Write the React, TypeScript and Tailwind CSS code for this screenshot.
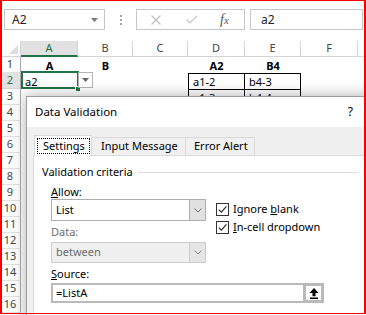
import React from 'react';

const COLS = [
  { key: 'A', w: 'w-[57px]' },
  { key: 'B', w: 'w-[55px]' },
  { key: 'C', w: 'w-[55px]' },
  { key: 'D', w: 'w-[57px]' },
  { key: 'E', w: 'w-[56px]' },
  { key: 'F', w: 'w-[57px]' },
  { key: 'G', w: 'w-[57px]' },
];

const ROWS = Array.from({ length: 16 }, (_, i) => i + 1);

function Chevron({ color = '#6b6b6b' }: { color?: string }) {
  return (
    <svg width="8" height="5" viewBox="0 0 8 5">
      <path d="M0.5 0.5 L4 4 L7.5 0.5" fill="none" stroke={color} strokeWidth="1" />
    </svg>
  );
}

function Check() {
  return (
    <span className="flex h-[13px] w-[13px] items-center justify-center border border-[#333] bg-white">
      <svg width="11" height="11" viewBox="0 0 11 11">
        <path d="M1.8 5.6 L4.4 8.2 L9.4 2.4" fill="none" stroke="#222" strokeWidth="1.1" />
      </svg>
    </span>
  );
}

function FormulaBar() {
  return (
    <div className="flex h-[41px] items-start pl-[4px] pt-[9px]">
      <div className="flex h-[21px] w-[101px] shrink-0 items-center justify-between border border-[#c6c6c6] pl-[7px] pr-[6px] text-[12px] text-[#222]">
        <span>A2</span>
        <svg width="7" height="4" viewBox="0 0 7 4">
          <path d="M0 0 H7 L3.5 4 Z" fill="#7a7a7a" />
        </svg>
      </div>
      <div className="flex h-[21px] w-[31px] shrink-0 flex-col items-center justify-center gap-[2px]">
        <span className="h-[2px] w-[2px] bg-[#a6a6a6]" />
        <span className="h-[2px] w-[2px] bg-[#a6a6a6]" />
        <span className="h-[2px] w-[2px] bg-[#a6a6a6]" />
      </div>
      <div className="flex h-[21px] w-[109px] shrink-0 items-center border border-[#c6c6c6]">
        <span className="ml-[13px] flex w-[12px] justify-center">
          <svg width="10" height="10" viewBox="0 0 10 10">
            <path d="M0.5 0.5 L9.5 9.5 M9.5 0.5 L0.5 9.5" stroke="#c2c2c2" strokeWidth="1.4" />
          </svg>
        </span>
        <span className="ml-[23px] flex w-[14px] justify-center">
          <svg width="12" height="9" viewBox="0 0 12 9">
            <path d="M0.8 4.6 L4 7.8 L11.2 0.8" fill="none" stroke="#cdcdcd" strokeWidth="1.5" />
          </svg>
        </span>
        <span className="ml-[21px] font-['Liberation_Serif',serif] text-[14px] italic leading-none text-[#555]">
          f<span className="text-[11px]">x</span>
        </span>
      </div>
      <div className="ml-[5px] flex h-[21px] w-[113px] shrink-0 items-center border border-[#c6c6c6] pl-[10px] text-[12px] text-[#222]">
        a2
      </div>
    </div>
  );
}

function HeaderRow() {
  return (
    <div className="flex h-[16px]">
      <div className="relative w-[21px] shrink-0 border-r border-b border-[#d4d4d4]">
        <svg className="absolute bottom-[2px] right-[2px]" width="9" height="9" viewBox="0 0 9 9">
          <path d="M9 0 V9 H0 Z" fill="#dcdcdc" />
        </svg>
      </div>
      {COLS.map((c) =>
        c.key === 'A' ? (
          <div
            key={c.key}
            className={`${c.w} flex shrink-0 items-center justify-center border-r border-b-2 border-r-[#d4d4d4] border-b-[#217346] bg-[#e1e1e1] text-[11px] text-[#217346]`}
          >
            {c.key}
          </div>
        ) : (
          <div
            key={c.key}
            className={`${c.w} flex shrink-0 items-center justify-center border-r border-b border-[#d4d4d4] text-[11px] text-[#444]`}
          >
            {/* column G sits past the window edge */}
            {c.key === 'G' ? null : c.key}
          </div>
        ),
      )}
    </div>
  );
}

function Cell({ row, col }: { row: number; col: string }) {
  if (row === 1) {
    const t: Record<string, string> = { A: 'A', B: 'B', D: 'A2', E: 'B4' };
    return <span className="w-full text-center font-bold">{t[col] ?? ''}</span>;
  }
  if (row === 2 && col === 'A') {
    return (
      <>
        <span className="pl-[4px]">a2</span>
        <span className="absolute -top-[2px] -right-[1px] bottom-0 left-0 border-2 border-[#217346]" />
        <span className="absolute -right-[3px] -bottom-[3px] h-[6px] w-[6px] border border-white bg-[#217346]" />
      </>
    );
  }
  if (row === 2 && col === 'B') {
    return (
      <span className="absolute -top-[1px] left-0 flex h-[16px] w-[15px] items-center justify-center border border-[#b3b3b3] bg-white">
        <svg width="7" height="4" viewBox="0 0 7 4">
          <path d="M0 0 H7 L3.5 4 Z" fill="#666" />
        </svg>
      </span>
    );
  }
  if (row >= 2 && (col === 'D' || col === 'E')) {
    const t: Record<string, string> = {
      D2: 'a1-2',
      E2: 'b4-3',
      D3: 'a1-3',
      E3: 'b4-4',
    };
    return <span className="pl-[4px]">{t[`${col}${row}`] ?? ''}</span>;
  }
  return null;
}

function Grid() {
  return (
    <div className="flex flex-col font-['Noto_Sans',sans-serif]">
      <HeaderRow />
      {ROWS.map((r) => (
        <div key={r} className="flex h-[16px]">
          <div
            className={
              r === 2
                ? 'flex w-[21px] shrink-0 items-center justify-center border-r border-b border-r-[#ababab] border-b-[#d4d4d4] bg-[#e1e1e1] text-[11px] text-[#217346]'
                : 'flex w-[21px] shrink-0 items-center justify-center border-r border-b border-r-[#ababab] border-b-[#e1e1e1] text-[11px] text-[#444]'
            }
          >
            {r}
          </div>
          {COLS.map((c) => {
            const boxed = r >= 2 && (c.key === 'D' || c.key === 'E');
            const border = boxed
              ? c.key === 'D'
                ? 'border-l border-t border-r border-black'
                : 'border-t border-r border-black'
              : '';
            return (
              <div
                key={c.key}
                className={`${c.w} ${border} relative flex shrink-0 items-center text-[11px] leading-none text-black`}
              >
                <Cell row={r} col={c.key} />
              </div>
            );
          })}
        </div>
      ))}
    </div>
  );
}

function Dialog() {
  return (
    <div className="absolute left-[26px] top-[96px] h-[240px] w-[350px] border border-[#9e9e9e] bg-[#f0f0f0] font-['Noto_Sans',sans-serif] text-[11px] text-black shadow-[0_0_14px_rgba(0,0,0,0.32)]">
      <div className="flex h-[30px] items-center justify-between bg-white pl-[8px] pr-[22px]">
        <span className="text-[11.5px]">Data Validation</span>
        <span className="text-[12px]">?</span>
      </div>
      <div className="px-[6px] pt-[8px]">
        <div className="flex h-[20px] items-end pl-[1px]">
          <div className="relative z-10 -mb-px h-[21px] w-[58px] border-l border-t border-r border-[#d9d9d9] bg-white pl-[2px] pt-[2px]">
            <span className="flex h-[16px] w-[53px] items-center border border-dotted border-black pl-[5px]">
              Settings
            </span>
          </div>
          <div className="flex h-[18px] w-[94px] items-center border-t border-r border-[#d9d9d9] bg-[#f0f0f0] pl-[9px]">
            Input Message
          </div>
          <div className="flex h-[18px] w-[69px] items-center border-t border-r border-[#d9d9d9] bg-[#f0f0f0] pl-[8px]">
            Error Alert
          </div>
        </div>
        <div className="h-[200px] border border-[#d9d9d9] bg-white">
          <div className="mt-[9px] flex h-[14px] items-center pl-[8px] pr-[10px]">
            <span>Validation criteria</span>
            <span className="ml-[5px] h-px flex-1 bg-[#dcdcdc]" />
          </div>
          <div className="mt-[6px] flex h-[14px] items-center pl-[17px]">
            <span>
              <span className="underline">A</span>llow:
            </span>
          </div>
          <div className="flex h-[22px] items-start pl-[17px]">
            <div className="flex h-[22px] w-[155px] items-center border border-[#adadad] bg-white">
              <span className="flex-1 pl-[4px]">List</span>
              <span className="flex h-full w-[16px] items-center justify-center border-l border-[#adadad] bg-[#e1e1e1]">
                <Chevron />
              </span>
            </div>
            <div className="ml-[10px] flex flex-col gap-[5px] pt-[4px]">
              <div className="flex h-[13px] items-center gap-[4px]">
                <Check />
                <span>
                  Ignore <span className="underline">b</span>lank
                </span>
              </div>
              <div className="flex h-[13px] items-center gap-[4px]">
                <Check />
                <span>
                  <span className="underline">I</span>n-cell dropdown
                </span>
              </div>
            </div>
          </div>
          <div className="mt-[4px] flex h-[14px] items-center pl-[17px] text-[#6d6d6d]">Data:</div>
          <div className="mt-[3px] pl-[17px]">
            <div className="flex h-[21px] w-[155px] items-center border border-[#cccccc] bg-[#f0f0f0] text-[#6d6d6d]">
              <span className="flex-1 pl-[4px]">between</span>
              <span className="flex h-full w-[16px] items-center justify-center border-l border-[#cccccc] bg-[#e5e5e5]">
                <Chevron color="#8a8a8a" />
              </span>
            </div>
          </div>
          <div className="mt-[4px] flex h-[14px] items-center pl-[17px]">
            <span>
              <span className="underline">S</span>ource:
            </span>
          </div>
          <div className="mt-[2px] flex pl-[17px]">
            <div className="flex h-[20px] w-[252px] items-center border-2 border-r-0 border-[#bababa] bg-white pl-[3px]">
              =ListA
            </div>
            <div className="flex h-[20px] w-[21px] items-center justify-center border-[3px] border-[#bababa] bg-white">
              <svg width="10" height="11" viewBox="0 0 10 11">
                <path d="M5 0 L9.5 5 H6.5 V8.2 H3.5 V5 H0.5 Z" fill="#000" />
                <rect x="1" y="9.5" width="8" height="1.5" fill="#000" />
              </svg>
            </div>
          </div>
        </div>
      </div>
    </div>
  );
}

export default function App() {
  return (
    <div className="relative h-[315px] w-[366px] overflow-hidden bg-white font-['Noto_Sans',sans-serif]">
      <FormulaBar />
      <Grid />
      <Dialog />
      <div className="pointer-events-none absolute left-0 top-0 h-[314px] w-[366px] border-t border-b border-l-2 border-r-2 border-[#ff0000]" />
    </div>
  );
}
